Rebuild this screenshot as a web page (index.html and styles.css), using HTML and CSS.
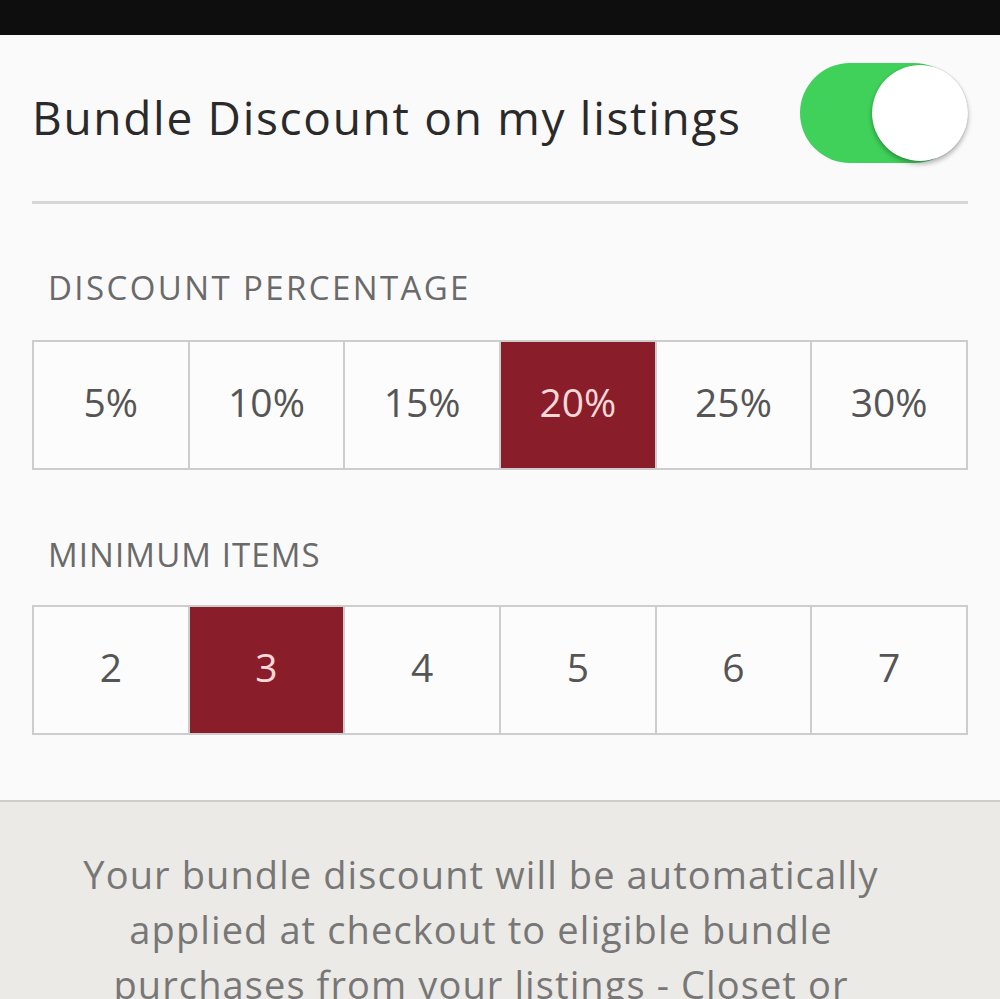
FILE: index.html
```html
<!DOCTYPE html>
<html>
<head>
<meta charset="utf-8">
<link rel="stylesheet" href="styles.css">
</head>
<body>
<div class="statusbar"></div>
<main class="panel">
  <div class="header-row">
    <h1 class="title">Bundle Discount on my listings</h1>
    <div class="toggle"><div class="knob"></div></div>
  </div>
  <div class="divider"></div>
  <h2 class="label label-first">DISCOUNT PERCENTAGE</h2>
  <div class="options">
    <div class="opt">5%</div>
    <div class="opt">10%</div>
    <div class="opt">15%</div>
    <div class="opt selected">20%</div>
    <div class="opt">25%</div>
    <div class="opt">30%</div>
  </div>
  <h2 class="label label-second">MINIMUM ITEMS</h2>
  <div class="options">
    <div class="opt">2</div>
    <div class="opt selected">3</div>
    <div class="opt">4</div>
    <div class="opt">5</div>
    <div class="opt">6</div>
    <div class="opt">7</div>
  </div>
</main>
<footer class="info">
  <p class="info-text">Your bundle discount will be automatically<br>applied at checkout to eligible bundle<br>purchases from your listings - Closet or</p>
</footer>
</body>
</html>
```
FILE: styles.css
```css
html, body {
  margin: 0;
  padding: 0;
}
body {
  width: 1000px;
  height: 999px;
  overflow: hidden;
  background: #fafafa;
  font-family: "Open Sans", "Lato", sans-serif;
}
.statusbar {
  height: 35px;
  background: #0e0e0e;
  box-shadow: 0 2px 3px rgba(0,0,0,0.15);
}
.panel {
  padding: 0 32px;
  background: #fafafa;
}
.header-row {
  display: flex;
  align-items: center;
  justify-content: space-between;
  padding: 28px 0 38px 0;
}
.title {
  margin: 8px 0 0 0;
  font-size: 46px;
  font-weight: 400;
  letter-spacing: 1.7px;
  color: #2a2a2a;
  line-height: 54px;
}
.toggle {
  width: 164px;
  height: 100px;
  border-radius: 50px;
  background: #3fd15a;
  margin-right: 4px;
  display: flex;
  align-items: center;
  justify-content: flex-end;
}
.knob {
  width: 96px;
  height: 96px;
  border-radius: 50%;
  background: #ffffff;
  margin-right: -4px;
  box-shadow: 0 3px 5px rgba(0,0,0,0.3), 0 0 1px rgba(0,0,0,0.3);
}
.divider {
  height: 3px;
  background: #d7d7d7;
}
.label {
  margin: 0;
  font-size: 33px;
  font-weight: 400;
  letter-spacing: 2.4px;
  line-height: 36px;
  color: #6a6a6a;
  padding-left: 16px;
}
.label-first {
  margin-top: 66px;
}
.label-second {
  margin-top: 67px;
  letter-spacing: 1.1px;
}
.options {
  display: grid;
  grid-template-columns: repeat(6, 1fr);
  gap: 2px;
  padding: 2px;
  background: #cdcdcd;
  height: 126px;
}
.label-first + .options {
  margin-top: 34px;
}
.label-second + .options {
  margin-top: 32px;
}
.opt {
  background: #fcfcfc;
  display: flex;
  align-items: center;
  justify-content: center;
  padding-bottom: 8px;
  font-size: 39px;
  color: #555555;
}
.opt.selected {
  background: #8a1d2a;
  color: #f6d8d8;
}
.info {
  margin-top: 65px;
  border-top: 2px solid #cfcfca;
  background: #ebeae6;
  padding: 45px 38px 0 0;
  height: 200px;
}
.info-text {
  margin: 0;
  text-align: center;
  font-size: 38px;
  letter-spacing: 1.1px;
  line-height: 55px;
  color: #777777;
}
```
